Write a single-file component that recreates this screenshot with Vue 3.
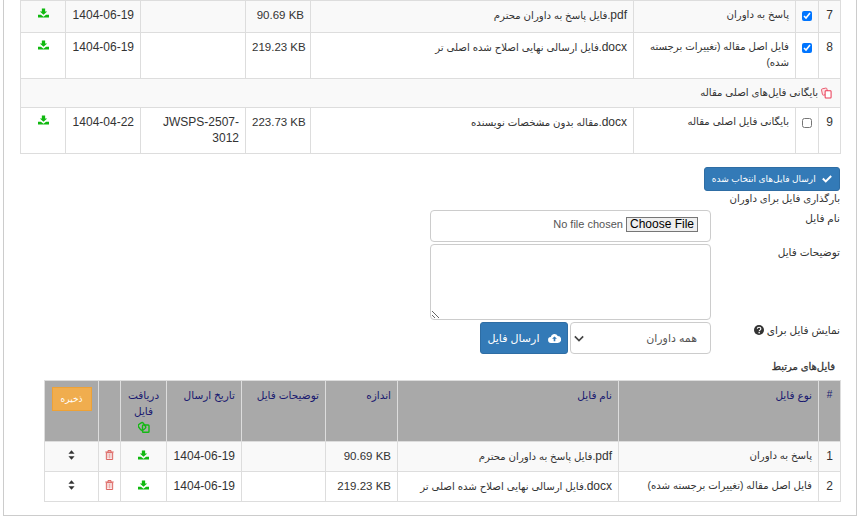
<script setup>
const upperRows = [
  { n: 7, type: "پاسخ به داوران", ext: "pdf", name: "فایل پاسخ به داوران محترم", size: "90.69 KB", code: "", date: "1404-06-19", checked: true, striped: true },
  { n: 8, type: "فایل اصل مقاله (تغییرات برجسته شده)", ext: "docx", name: "فایل ارسالی نهایی اصلاح شده اصلی تر", size: "219.23 KB", code: "", date: "1404-06-19", checked: true },
  { group: "بایگانی فایل‌های اصلی مقاله" },
  { n: 9, type: "بایگانی فایل اصلی مقاله", ext: "docx", name: "مقاله بدون مشخصات نویسنده", size: "223.73 KB", code: "JWSPS-2507-3012", date: "1404-04-22", checked: false },
];
const relatedRows = [
  { n: 1, type: "پاسخ به داوران", ext: "pdf", name: "فایل پاسخ به داوران محترم", size: "90.69 KB", date: "1404-06-19" },
  { n: 2, type: "فایل اصل مقاله (تغییرات برجسته شده)", ext: "docx", name: "فایل ارسالی نهایی اصلاح شده اصلی تر", size: "219.23 KB", date: "1404-06-19" },
];
</script>

<template>
  <div class="page" dir="rtl">
    <div class="panel">
      <table class="grid upper">
        <colgroup>
          <col style="width: 22px" /><col style="width: 23px" /><col style="width: 162px" /><col style="width: 323px" />
          <col style="width: 65px" /><col style="width: 105px" /><col style="width: 75px" /><col style="width: 45px" />
        </colgroup>
        <tbody>
          <template v-for="(row, i) in upperRows" :key="i">
            <tr v-if="row.group" class="group">
              <td colspan="8">
                <svg class="copy-red" viewBox="0 0 12 13" width="11" height="12"><rect x="1" y="1.500" width="6" height="7" rx="1" fill="#fde3e6" stroke="#ea5a6e" transform="rotate(-12 4 5)" /><rect x="4.500" y="4" width="6.500" height="8" rx="0.800" fill="#fff" stroke="#ea3a55" stroke-width="1.100" /></svg>
                {{ row.group }}
              </td>
            </tr>
            <tr v-else :class="{ striped: row.striped }">
              <td class="num">{{ row.n }}</td>
              <td class="check"><input type="checkbox" :checked="row.checked" /></td>
              <td class="type">{{ row.type }}</td>
              <td><span class="ext">{{ row.ext }}</span>.{{ row.name }}</td>
              <td class="latin size">{{ row.size }}</td>
              <td class="latin code">{{ row.code }}</td>
              <td class="latin">{{ row.date }}</td>
              <td class="icon">
                <svg viewBox="0 0 12 10" width="11" height="10"><path d="M4.200 0h3.600v3.400H10L6 7 2 3.400h2.200zM0 7h3.200L6 9l2.800-2H12v3H0z" fill="#0fb80f" /></svg>
              </td>
            </tr>
          </template>
        </tbody>
      </table>

      <div class="send-row">
        <button class="btn send-selected">
          <svg viewBox="0 0 12 10" width="10" height="9"><path d="M1 5l3.500 3.500L11 2" fill="none" stroke="#fff" stroke-width="2.400" /></svg>
          ارسال فایل‌های انتخاب شده
        </button>
      </div>
      <div class="upload-title">بارگذاری فایل برای داوران</div>

      <div class="form">
        <label>نام فایل</label>
        <div class="box file-box"><input type="file" /></div>
        <label>توضیحات فایل</label>
        <textarea class="box notes"></textarea>
        <label>
          نمایش فایل برای
          <svg viewBox="0 0 12 12" width="10" height="10"><circle cx="6" cy="6" r="6" fill="#333" /><path d="M4 4.600c0-2.600 4.200-2.600 4.200 0 0 1.600-2 1.500-2 3" fill="none" stroke="#fff" stroke-width="1.400" /><rect x="5.400" y="8.400" width="1.600" height="1.600" fill="#fff" /></svg>
        </label>
        <div class="send-line">
          <div class="box select-box">
            <span>همه داوران</span>
            <svg viewBox="0 0 12 8" width="10" height="7"><path d="M1 1.500l5 5 5-5" fill="none" stroke="#444" stroke-width="2" /></svg>
          </div>
          <button class="btn send-file">
            <svg viewBox="0 0 16 12" width="13" height="10"><path d="M4 12a3.600 3.600 0 0 1-.6-7.200A4.600 4.600 0 0 1 12 3.600 4.200 4.200 0 0 1 12 12z" fill="#fff" /><path d="M8 4l3 3H9v3H7V7H5z" fill="#337ab7" /></svg>
            ارسال فایل
          </button>
        </div>
      </div>

      <div class="related-title">فایل‌های مرتبط</div>

      <table class="grid related">
        <colgroup>
          <col style="width: 22px" /><col style="width: 200px" /><col style="width: 221px" /><col style="width: 72px" />
          <col style="width: 84px" /><col style="width: 75px" /><col style="width: 46px" /><col style="width: 22px" /><col style="width: 54px" />
        </colgroup>
        <thead>
          <tr>
            <th class="hash">#</th>
            <th>نوع فایل</th>
            <th>نام فایل</th>
            <th>اندازه</th>
            <th>توضیحات فایل</th>
            <th>تاریخ ارسال</th>
            <th class="center">
              دریافت فایل
              <svg class="copy-green" viewBox="0 0 12 12" width="12" height="12"><rect x="1" y="2" width="6" height="7" rx="2" fill="none" stroke="#14b814" stroke-width="1.400" transform="rotate(-35 4 5.500)" /><rect x="4.500" y="4" width="6.500" height="7.200" rx="0.800" fill="none" stroke="#14b814" stroke-width="1.400" /></svg>
            </th>
            <th></th>
            <th class="center"><button class="save">ذخیره</button></th>
          </tr>
        </thead>
        <tbody>
          <tr v-for="(row, i) in relatedRows" :key="row.n" :class="{ striped: i === 0 }">
            <td class="num">{{ row.n }}</td>
            <td>{{ row.type }}</td>
            <td><span class="ext">{{ row.ext }}</span>.{{ row.name }}</td>
            <td class="latin size">{{ row.size }}</td>
            <td></td>
            <td class="latin">{{ row.date }}</td>
            <td class="icon">
              <svg viewBox="0 0 12 10" width="11" height="10"><path d="M4.200 0h3.600v3.400H10L6 7 2 3.400h2.200zM0 7h3.200L6 9l2.800-2H12v3H0z" fill="#0fb80f" /></svg>
            </td>
            <td class="icon">
              <svg viewBox="0 0 10 11" width="9" height="10"><path d="M1.500 3h7v7.500h-7zM.3 2.200h9.400M3.300 2V.6h3.400V2" fill="none" stroke="#d9534f" stroke-width="1" /><path d="M3.300 4.300v5M5 4.300v5M6.700 4.300v5" stroke="#e8a5a2" stroke-width="1" /></svg>
            </td>
            <td class="icon">
              <svg viewBox="0 0 8 11" width="7" height="10"><path d="M4 0l3.500 4H.5zM4 11L.5 7h7z" fill="#333" /></svg>
            </td>
          </tr>
        </tbody>
      </table>
    </div>
  </div>
</template>

<style scoped>
.page {
  width: 865px;
  height: 520px;
  overflow: hidden;
  background: #fff;
  font-family: "Liberation Sans", "DejaVu Sans", sans-serif;
  font-size: 11px;
  color: #333;
  line-height: 16px;
}

.panel {
  box-sizing: border-box;
  width: 854px;
  height: 516px;
  margin-right: 8px;
  padding: 0 15px 0 16px;
  border: 1px solid #ccc;
  border-top: none;
}

.grid {
  border-collapse: collapse;
  table-layout: fixed;
}

.grid td,
.grid th {
  border: 1px solid #ddd;
  padding: 6px 6px 7px;
  text-align: right;
  vertical-align: top;
  font-weight: normal;
}

.grid td {
  font-size: 10.200px;
}

.upper {
  width: 820px;
}

.related {
  width: 796px;
}

.striped td,
.group td {
  background: #f9f9f9;
}

.grid .group td {
  padding: 6px 8px 6px 6px;
}

.copy-red {
  vertical-align: -3px;
}

.ext {
  font-size: 12px;
}

.grid .latin,
.grid .num {
  font-size: 12px;
}

.grid .num {
  text-align: center;
}

.grid .size {
  direction: ltr;
  white-space: nowrap;
  font-size: 11.500px;
}

.grid .check {
  text-align: center;
  padding: 10px 0 0;
  height: 21px;
}

.check input {
  display: block;
  width: 10px;
  height: 10px;
  margin: 0 auto;
}

.grid .type {
  padding-left: 2px;
}

.grid .icon {
  text-align: center;
  padding-top: 6px;
}

.send-row {
  margin: 13px 1px 0 0;
}

.btn {
  background: #337ab7;
  border: 1px solid #2e6da4;
  color: #fff;
  font-family: inherit;
  border-radius: 3px;
  white-space: nowrap;
}

.send-selected {
  display: block;
  width: 136px;
  height: 24px;
  padding: 0;
  font-size: 9px;
}

.send-selected svg {
  margin-left: 4px;
  vertical-align: -1px;
}

.upload-title {
  margin-right: 1px;
  font-size: 10.200px;
}

.form {
  display: grid;
  grid-template-columns: 129px 281px;
  grid-template-rows: 32px 76px 32px;
  row-gap: 2px;
  margin: 3px 1px 0 0;
}

label {
  display: block;
  font-size: 10.500px;
}

label svg {
  vertical-align: -1px;
}

.box {
  box-sizing: border-box;
  border: 1px solid #ccc;
  border-radius: 4px;
  background: #fff;
}

.file-box {
  padding: 5px 12px 0;
}

.file-box input {
  width: 100%;
  font-family: "Liberation Sans", sans-serif;
  font-size: 11px;
  color: #555;
}

.file-box input::file-selector-button {
  height: 15px;
  margin: 0 0 0 3px;
  padding: 0 3px;
  border: 1px solid #767676;
  border-radius: 0;
  background: #efefef;
  color: #000;
  font-size: 12px;
  line-height: 13px;
}

.notes {
  display: block;
  width: 281px;
  height: 76px;
  margin: 0;
}

.send-line {
  display: flex;
  gap: 2px;
}

.select-box {
  width: 141px;
  display: flex;
  align-items: center;
  justify-content: space-between;
  padding: 0 13px 0 3px;
  color: #555;
}

.send-file {
  width: 88px;
  height: 32px;
  padding: 0;
  font-size: 11px;
}

.send-file svg {
  margin-left: 5px;
  vertical-align: -1px;
}

.related-title {
  margin-top: 5px;
  padding-right: 6px;
  height: 21px;
  font-size: 10px;
  -webkit-text-stroke: 0.3px #333;
}

.related th {
  background: #a9a9a9;
  color: #191970;
  font-size: 10.500px;
  padding: 6px 6px 8px;
}

.grid .center {
  text-align: center;
}

.copy-green {
  display: block;
  margin: 2px auto 0;
}

.grid .hash {
  text-align: center;
  font-size: 10px;
}

.save {
  width: 40px;
  height: 24px;
  padding: 0;
  border: 1px solid #eea236;
  background: #f0ad4e;
  color: #fff;
  font-family: inherit;
  font-size: 9px;
}

.related td {
  height: 17px;
  padding-bottom: 6px;
}

.related .icon {
  padding-top: 7px;
  padding-bottom: 5px;
}
</style>

<style>
html,
body {
  margin: 0;
  background: #fff;
}
</style>
